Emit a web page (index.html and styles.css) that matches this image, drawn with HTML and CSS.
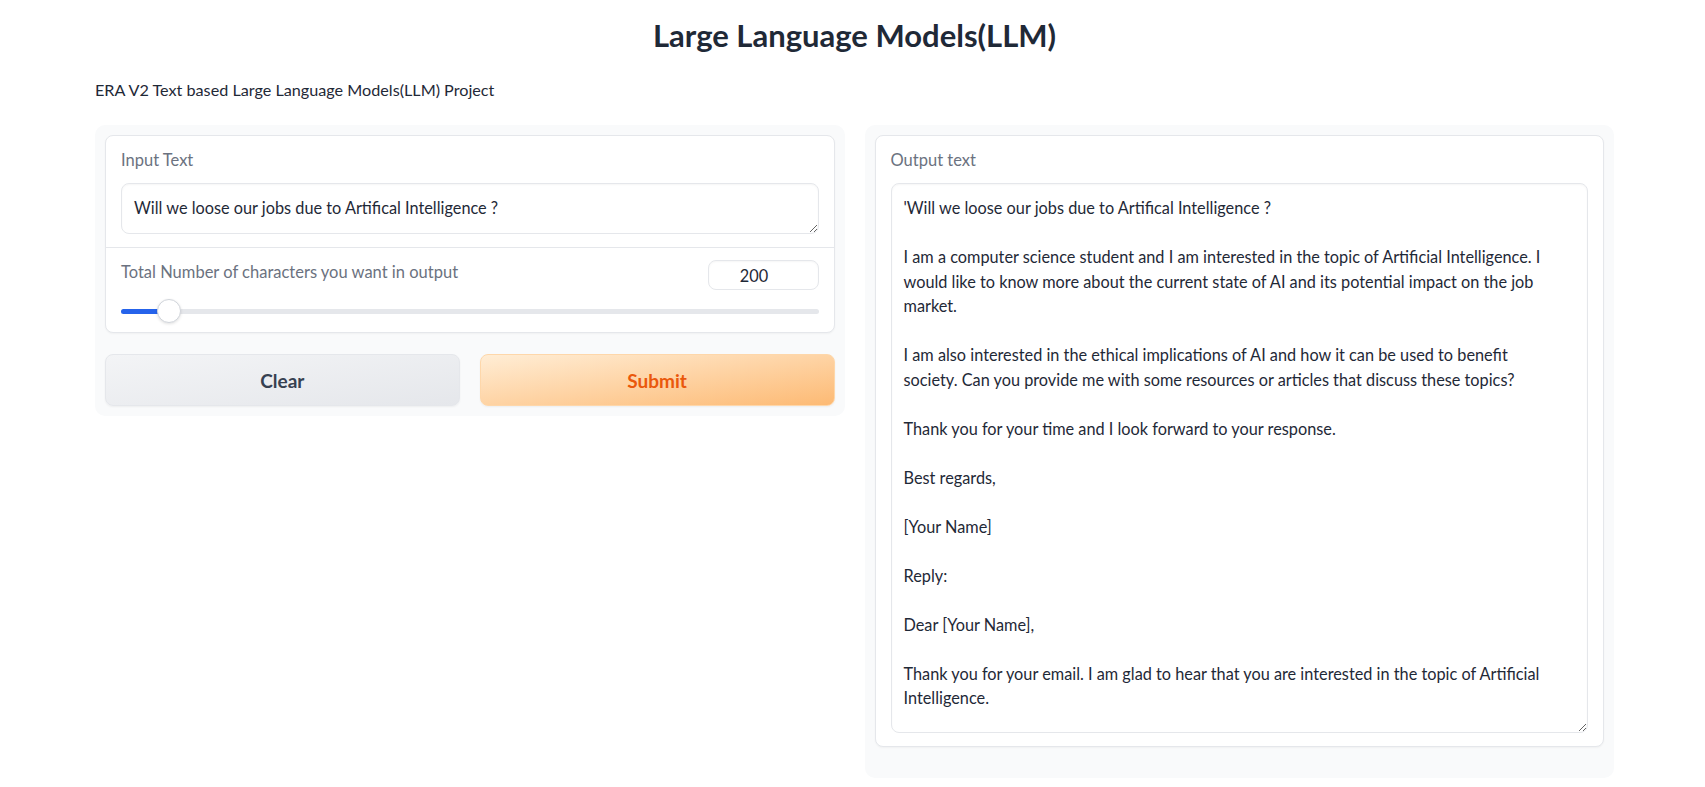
FILE: index.html
```html
<!DOCTYPE html>
<html lang="en">
<head>
<meta charset="utf-8">
<title>Large Language Models(LLM)</title>
<link rel="stylesheet" href="styles.css">
</head>
<body>
<div class="app">
  <h1 class="title">Large Language Models(LLM)</h1>
  <p class="subtitle">ERA V2 Text based Large Language Models(LLM) Project</p>
  <div class="row">
    <div class="panel">
      <div class="block">
        <div class="field">
          <label class="label">Input Text</label>
          <textarea class="textbox small" rows="1" readonly>Will we loose our jobs due to Artifical Intelligence ?</textarea>
        </div>
        <div class="field slider-field">
          <div class="slider-head">
            <span class="label">Total Number of characters you want in output</span>
            <input class="num" type="text" value="200" readonly>
          </div>
          <div class="slider">
            <div class="track"><div class="fill"></div></div>
            <div class="thumb"></div>
          </div>
        </div>
      </div>
      <div class="buttons">
        <button class="btn secondary">Clear</button>
        <button class="btn primary">Submit</button>
      </div>
    </div>
    <div class="panel out-panel">
      <div class="block out-block">
        <div class="field">
          <label class="label">Output text</label>
          <textarea class="textbox big" wrap="off" readonly>'Will we loose our jobs due to Artifical Intelligence ?

I am a computer science student and I am interested in the topic of Artificial Intelligence. I
would like to know more about the current state of AI and its potential impact on the job
market.

I am also interested in the ethical implications of AI and how it can be used to benefit
society. Can you provide me with some resources or articles that discuss these topics?

Thank you for your time and I look forward to your response.

Best regards,

[Your Name]

Reply:

Dear [Your Name],

Thank you for your email. I am glad to hear that you are interested in the topic of Artificial
Intelligence.
</textarea>
        </div>
      </div>
    </div>
  </div>
</div>
</body>
</html>
```
FILE: styles.css
```css
* { box-sizing: border-box; }

body {
  margin: 0;
  background: #ffffff;
  font-family: Lato, "Open Sans", sans-serif;
  color: #1f2937;
}

.app {
  width: 1519px;
  margin-left: 95px;
  padding-top: 17px;
}

.title {
  margin: 0;
  text-align: center;
  font-size: 31px;
  line-height: 36px;
  font-weight: 700;
  color: #1f2937;
}

.subtitle {
  margin: 27px 0 0 0;
  font-size: 16.2px;
  line-height: 20px;
  color: #1f2937;
}

.row {
  display: flex;
  gap: 20px;
  margin-top: 25px;
  align-items: flex-start;
}

.panel {
  flex: 1 1 0;
  background: #f9fafb;
  border-radius: 10px;
  padding: 10px;
}

.out-panel {
  padding-bottom: 31px;
}

.block {
  background: #ffffff;
  border: 1px solid #e5e7eb;
  border-radius: 8px;
  box-shadow: 0 1px 2px rgba(0, 0, 0, 0.04);
}

.field {
  padding: 14px 15px 13px 15px;
  display: flex;
  flex-direction: column;
}

.label {
  display: block;
  font-size: 16.5px;
  line-height: 20px;
  color: #6b7280;
  margin-bottom: 13px;
}

.textbox {
  display: block;
  width: 100%;
  border: 1px solid #e5e7eb;
  border-radius: 8px;
  background: #ffffff;
  box-shadow: inset 0 1px 2px rgba(0, 0, 0, 0.04);
  padding: 12px 12px;
  font-family: Lato, "Open Sans", sans-serif;
  font-size: 16.3px;
  line-height: 24.5px;
  color: #1f2937;
  outline: none;
  resize: vertical;
  overflow: hidden;
}

.small {
  height: 51px;
}

.big {
  height: 550px;
  white-space: pre;
}

.slider-field {
  border-top: 1px solid #e5e7eb;
  padding-top: 12px;
  padding-bottom: 9px;
}

.slider-head {
  display: flex;
  justify-content: space-between;
  align-items: flex-start;
}

.slider-head .label {
  margin: 2px 0 0 0;
}

.num {
  width: 111px;
  height: 30px;
  border: 1px solid #e5e7eb;
  border-radius: 8px;
  box-shadow: inset 0 1px 2px rgba(0, 0, 0, 0.04);
  text-align: center;
  font-family: Lato, "Open Sans", sans-serif;
  font-size: 16.3px;
  color: #1f2937;
  outline: none;
  padding: 0 18px 0 0;
}

.slider {
  position: relative;
  height: 24px;
  margin-top: 9px;
  display: flex;
  align-items: center;
}

.track {
  width: 100%;
  height: 5px;
  background: #e5e7eb;
  border-radius: 3px;
  overflow: hidden;
}

.fill {
  width: 40px;
  height: 100%;
  background: #2563eb;
}

.thumb {
  position: absolute;
  left: 36px;
  top: 0;
  width: 24px;
  height: 24px;
  border-radius: 50%;
  background: #ffffff;
  border: 1px solid #d1d5db;
  box-shadow: 0 1px 3px rgba(0, 0, 0, 0.12);
}

.buttons {
  display: flex;
  gap: 20px;
  margin-top: 21px;
}

.btn {
  flex: 1 1 0;
  height: 52px;
  border-radius: 8px;
  font-family: Lato, "Open Sans", sans-serif;
  font-size: 19px;
  font-weight: 700;
  cursor: pointer;
  box-shadow: 0 1px 2px rgba(0, 0, 0, 0.05);
}

.secondary {
  background: linear-gradient(to bottom right, #f3f4f6, #e5e7eb);
  border: 1px solid #e5e7eb;
  color: #374151;
}

.primary {
  background: linear-gradient(to bottom right, #ffedd5, #fdba74);
  border: 1px solid #fed7aa;
  color: #ea580c;
}
```
